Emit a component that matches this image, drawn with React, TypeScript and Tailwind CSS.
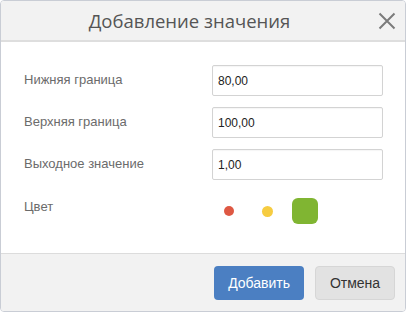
import { useState } from 'react';

const SWATCHES = [
  { color: '#de5843', size: 'w-[10px] h-[10px] rounded-full' },
  { color: '#f6cc41', size: 'w-[11px] h-[11px] rounded-full' },
  { color: '#80b532', size: 'w-[26px] h-[26px] rounded-[6px]' },
];

function Field({ label, value, onChange }: { label: string; value: string; onChange: (v: string) => void }) {
  return (
    <div className="flex items-start">
      <label className="w-[188px] pt-[7px] text-[13px] leading-[15px] text-[#6b6b6b]">{label}</label>
      <input
        value={value}
        onChange={(e) => onChange(e.target.value)}
        className="w-[171px] h-[31px] px-[5px] border border-[#d3d3d3] rounded-[2px] text-[12px] text-[#222] outline-none shadow-[inset_0_1px_1px_rgba(0,0,0,0.04)]"
      />
    </div>
  );
}

export default function App() {
  const [low, setLow] = useState('80,00');
  const [high, setHigh] = useState('100,00');
  const [out, setOut] = useState('1,00');
  const [picked, setPicked] = useState(2);

  return (
    <div className="w-[407px] h-[312px] bg-white" style={{ fontFamily: '"Liberation Sans", Arial, sans-serif' }}>
      <div className="w-[406px] h-[312px] flex flex-col border border-[#c9cdd5] rounded-[4px] overflow-hidden">
        {/* header */}
        <div className="h-[41px] shrink-0 flex items-center bg-[#f2f2f2] border-b-2 border-[#dedede]">
          <h2
            className="flex-1 text-center text-[18.5px] text-[#555]"
            style={{ fontFamily: '"Open Sans", sans-serif' }}
          >
            Добавление значения
          </h2>
          <button className="w-[18px] h-[18px] mr-[9px] text-[#7b7b7b]">
            <svg viewBox="0 0 18 18" width="18" height="18" fill="none" stroke="currentColor" strokeWidth="2">
              <path d="M1.5 1.5 L16.5 16.5 M16.5 1.5 L1.5 16.5" />
            </svg>
          </button>
        </div>

        {/* body */}
        <div className="flex-1 pl-[23px] pt-[23px] flex flex-col gap-[11px]">
          <Field label="Нижняя граница" value={low} onChange={setLow} />
          <Field label="Верхняя граница" value={high} onChange={setHigh} />
          <Field label="Выходное значение" value={out} onChange={setOut} />
          <div className="flex items-start mt-[7px]">
            <span className="w-[188px] pt-[1px] text-[13px] leading-[15px] text-[#6b6b6b]">Цвет</span>
            <div className="flex gap-[4px]">
              {SWATCHES.map((s, i) => (
                <button
                  key={s.color}
                  onClick={() => setPicked(i)}
                  className="w-[34px] h-[26px] flex items-center justify-center"
                >
                  <span
                    className={i === picked ? 'w-[26px] h-[26px] rounded-[6px]' : s.size}
                    style={{ backgroundColor: s.color }}
                  />
                </button>
              ))}
            </div>
          </div>
        </div>

        {/* footer */}
        <div className="h-[58px] shrink-0 flex justify-end items-start gap-[11px] pt-[12px] pr-[10px] bg-[#f2f2f2] border-t border-[#dcdcdc]">
          <button className="h-[34px] px-[14px] rounded-[4px] bg-[#4b7fc2] text-white text-[14px]">Добавить</button>
          <button className="h-[34px] w-[80px] rounded-[4px] bg-[#e2e2e2] border border-[#d6d6d6] text-[#333] text-[14px]">
            Отмена
          </button>
        </div>
      </div>
    </div>
  );
}
